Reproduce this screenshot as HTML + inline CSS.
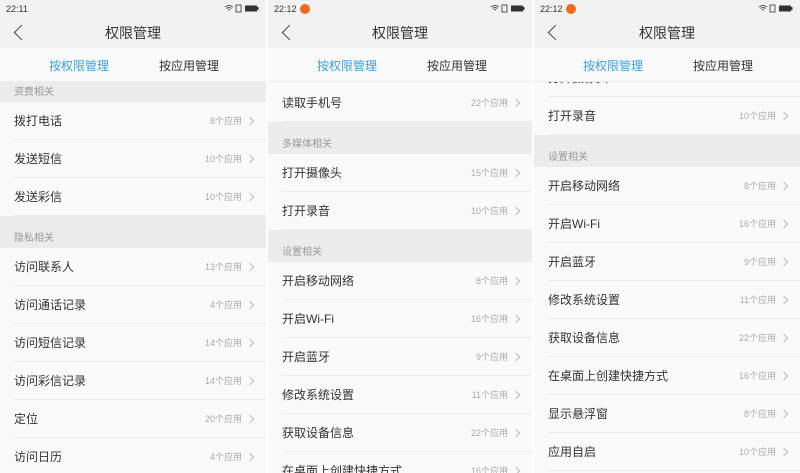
<!DOCTYPE html><html><head><meta charset="utf-8"><style>
*{margin:0;padding:0;box-sizing:border-box}
body{width:800px;height:473px;background:#fff;overflow:hidden;font-family:"Liberation Sans","Noto Sans CJK SC",sans-serif;position:relative}
.p{position:absolute;top:0;height:473px;background:#fafafa;overflow:hidden}
.sb{position:absolute;top:0;left:0;right:0;height:18px;background:#f2f2f2;font-size:9px;color:#333;padding:4px 0 0 6px}
.dot{display:inline-block;width:10px;height:10px;border-radius:50%;background:#f06a1e;vertical-align:-2px;margin-left:3px}
.ic{position:absolute;right:6px;top:4px}
.tb{position:absolute;top:18px;left:0;right:0;height:30px;background:#f2f2f2;text-align:center;font-size:14px;color:#333;line-height:30px}
.bk{position:absolute;left:16px;top:9px;width:11px;height:11px;border-left:1.5px solid #444;border-bottom:1.5px solid #444;transform:rotate(45deg)}
.tabs{position:absolute;top:48px;left:0;right:0;height:34px;background:#fafafa;border-bottom:1px solid #ececec;font-size:12px;z-index:2}
.tabs span{position:absolute;top:9px;transform:translateX(-50%);white-space:nowrap;color:#333}
.tabs .a{color:#3aa0e8}
.ct{position:absolute;top:82px;left:0;right:0;bottom:0;overflow:hidden}
.l{position:absolute;left:0;right:0}
.r{height:38px;position:relative;font-size:12px;color:#333;line-height:38px;padding-left:14px;background:#fafafa}
.r:after{content:"";position:absolute;left:14px;right:0;bottom:0;height:1px;background:#eeeeee}
.r b{font-weight:normal;position:absolute;right:24px;font-size:9px;color:#aaa}
.r i{position:absolute;right:13px;top:16px;width:6px;height:6px;border-top:1px solid #bbb;border-right:1px solid #bbb;transform:rotate(45deg)}
.s{height:32px;background:#ececec;font-size:10px;color:#999;padding:13px 0 0 14px}
</style></head><body>
<div class="p" style="left:0;width:266px">
<div class="sb">22:11<svg class="ic" width="36" height="9"><path d="M1 3 Q5 0 9 3 M2.5 4.5 Q5 2.5 7.5 4.5 M4 6 Q5 5 6 6" stroke="#555" fill="none"/><rect x="12" y="1" width="5" height="7" fill="none" stroke="#555"/><rect x="21" y="1.5" width="12" height="6" fill="#333"/><rect x="33" y="3" width="1.5" height="3" fill="#333"/></svg></div>
<div class="tb"><div class="bk"></div>权限管理</div>
<div class="tabs"><span class="a" style="left:79px">按权限管理</span><span style="left:189px">按应用管理</span></div>
<div class="ct"><div class="l" style="top:-12px">
<div class="s">资费相关</div>
<div class="r">拨打电话<b>8个应用</b><i></i></div>
<div class="r">发送短信<b>10个应用</b><i></i></div>
<div class="r">发送彩信<b>10个应用</b><i></i></div>
<div class="s">隐私相关</div>
<div class="r">访问联系人<b>13个应用</b><i></i></div>
<div class="r">访问通话记录<b>4个应用</b><i></i></div>
<div class="r">访问短信记录<b>14个应用</b><i></i></div>
<div class="r">访问彩信记录<b>14个应用</b><i></i></div>
<div class="r">定位<b>20个应用</b><i></i></div>
<div class="r">访问日历<b>4个应用</b><i></i></div>
</div></div></div>

<div class="p" style="left:268px;width:264px">
<div class="sb">22:12<span class="dot"></span><svg class="ic" width="36" height="9"><path d="M1 3 Q5 0 9 3 M2.5 4.5 Q5 2.5 7.5 4.5 M4 6 Q5 5 6 6" stroke="#555" fill="none"/><rect x="12" y="1" width="5" height="7" fill="none" stroke="#555"/><rect x="21" y="1.5" width="12" height="6" fill="#333"/><rect x="33" y="3" width="1.5" height="3" fill="#333"/></svg></div>
<div class="tb"><div class="bk"></div>权限管理</div>
<div class="tabs"><span class="a" style="left:79px">按权限管理</span><span style="left:189px">按应用管理</span></div>
<div class="ct"><div class="l" style="top:2px">
<div class="r">读取手机号<b>22个应用</b><i></i></div>
<div class="s">多媒体相关</div>
<div class="r">打开摄像头<b>15个应用</b><i></i></div>
<div class="r">打开录音<b>10个应用</b><i></i></div>
<div class="s">设置相关</div>
<div class="r">开启移动网络<b>8个应用</b><i></i></div>
<div class="r">开启Wi-Fi<b>16个应用</b><i></i></div>
<div class="r">开启蓝牙<b>9个应用</b><i></i></div>
<div class="r">修改系统设置<b>11个应用</b><i></i></div>
<div class="r">获取设备信息<b>22个应用</b><i></i></div>
<div class="r">在桌面上创建快捷方式<b>16个应用</b><i></i></div>
</div></div></div>

<div class="p" style="left:534px;width:266px">
<div class="sb">22:12<span class="dot"></span><svg class="ic" width="36" height="9"><path d="M1 3 Q5 0 9 3 M2.5 4.5 Q5 2.5 7.5 4.5 M4 6 Q5 5 6 6" stroke="#555" fill="none"/><rect x="12" y="1" width="5" height="7" fill="none" stroke="#555"/><rect x="21" y="1.5" width="12" height="6" fill="#333"/><rect x="33" y="3" width="1.5" height="3" fill="#333"/></svg></div>
<div class="tb"><div class="bk"></div>权限管理</div>
<div class="tabs"><span class="a" style="left:79px">按权限管理</span><span style="left:189px">按应用管理</span></div>
<div class="ct"><div class="l" style="top:-23px">
<div class="r">打开摄像头<b>15个应用</b><i></i></div>
<div class="r">打开录音<b>10个应用</b><i></i></div>
<div class="s">设置相关</div>
<div class="r">开启移动网络<b>8个应用</b><i></i></div>
<div class="r">开启Wi-Fi<b>16个应用</b><i></i></div>
<div class="r">开启蓝牙<b>9个应用</b><i></i></div>
<div class="r">修改系统设置<b>11个应用</b><i></i></div>
<div class="r">获取设备信息<b>22个应用</b><i></i></div>
<div class="r">在桌面上创建快捷方式<b>16个应用</b><i></i></div>
<div class="r">显示悬浮窗<b>8个应用</b><i></i></div>
<div class="r">应用自启<b>10个应用</b><i></i></div>
</div></div></div>
</body></html>
